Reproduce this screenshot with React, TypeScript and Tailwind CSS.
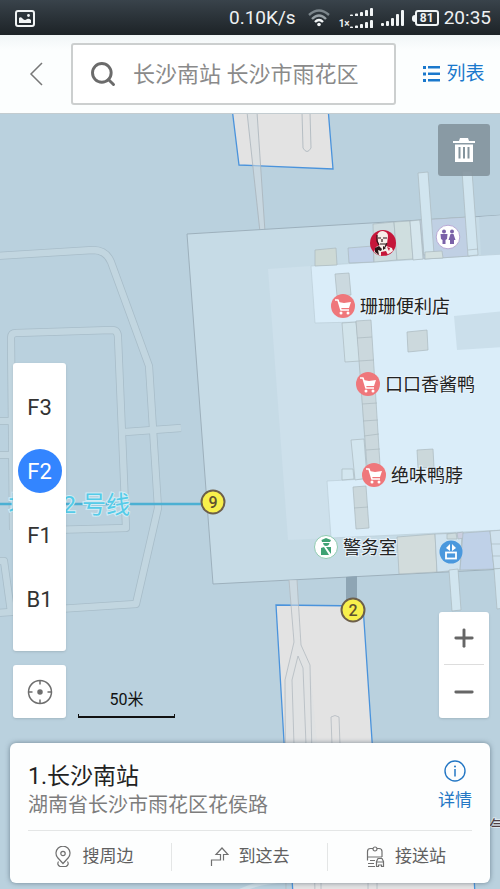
import React, { useState } from 'react';
import { Minus, Plus, Search } from 'lucide-react';

const FLOORS = ['F3', 'F2', 'F1', 'B1'];

const shops = [
  { name: '珊珊便利店', x: 343, y: 306 },
  { name: '口口香酱鸭', x: 368, y: 384 },
  { name: '绝味鸭脖', x: 374, y: 475 },
];

const exits = [
  { label: '9', x: 213, y: 502 },
  { label: '2', x: 353, y: 610 },
];

const roads = [
  'M-4 256 L93 250 Q106 250 111 262 L149 366 L158 508 L136 604 L-4 613',
  'M13 530 L11 338 Q11 333 16 333 L112 330 Q118 330 118 338 L126 528 L13 531',
  'M125 432 L181 428',
  'M-4 421 H12',
  'M-4 455 H12',
  'M-4 561 H4 L11 612',
];

// rooms along the corridor and the outer edge of the building
const rooms = [
  { points: '315,250 336,248 337,265 315,266', fill: '#cdd9d5' },
  { points: '348,248 373,246 374,262 349,263', fill: '#c1d2e9' },
  { points: '373,224 394,222 397,260 374,262', fill: '#cddce0' },
  { points: '394,222 410,221 413,259 397,260', fill: '#cfdedf' },
  { points: '410,221 420,220 423,259 413,260', fill: '#d5e6ed' },
  { points: '420,220 467,217 470,256 424,259', fill: '#c0d0e4' },
  { points: '418,173 428,172 434,254 424,255', fill: '#d1e5ef' },
  { points: '462,171 472,171 478,255 468,256', fill: '#d1e5ef' },
  { points: '425,252 442,251 443,258 425,259', fill: '#d3e0e0' },
  { points: '335,274 349,273 351,295 337,296', fill: '#cbd9df' },
  { points: '407,332 427,330 428,350 408,352', fill: '#ccd9dd' },
  { points: '417,450 433,449 434,467 418,468', fill: '#cbd8db' },
  { points: '342,323 356,322 360,361 345,362', fill: '#d2e4eb' },
  { points: '351,440 364,439 367,478 355,480', fill: '#d3e6ef' },
  { points: '342,469 353,469 354,479 342,480', fill: '#d3e6ef' },
  { points: '356,321 371,320 380,465 367,466', fill: '#cbd8dd' },
  { points: '353,487 366,486 369,528 356,529', fill: '#cbd8dc' },
  { points: '397,537 435,534 437,572 399,574', fill: '#d2dcdc' },
  { points: '435,534 462,533 460,570 437,572', fill: '#d0e3ef' },
  { points: '447,534 456,533 457,539 447,539', fill: '#cddbde' },
  { points: '457,533 463,532 464,538 458,539', fill: '#cbcfe0' },
  { points: '463,533 490,531 494,569 460,570', fill: '#bfd1e8' },
  { points: '490,531 504,530 504,568 494,569', fill: '#d0e2ee' },
  { points: '449,570 458,569 461,610 452,611', fill: '#d1e5ef' },
  { points: '494,569 504,568 504,608 497,609', fill: '#d1e5ef' },
];

const ShopPin = ({ name, x, y }: { name: string; x: number; y: number }) => (
  <g transform={`translate(${x} ${y})`}>
    <circle r="12" fill="#ef777b" />
    <path d="M-8 -6 H-5 L-2 4 H6" fill="none" stroke="#fff" strokeWidth="1.6" strokeLinejoin="round" />
    <path d="M-4.5 -4 L1 -3 L8 -4 L6 2 H-2.5 Z" fill="#fff" />
    <circle cx="-2" cy="7" r="1.5" fill="#fff" />
    <circle cx="5" cy="7" r="1.5" fill="#fff" />
    <text x="17" y="7" fontSize="18" className="fill-[#222222] stroke-[#e6f2fa] stroke-2 [paint-order:stroke]">
      {name}
    </text>
  </g>
);

const ExitPin = ({ label, x, y }: { label: string; x: number; y: number }) => (
  <g transform={`translate(${x} ${y})`}>
    <circle r="11.5" fill="#f8f04c" stroke="#6d5f4a" strokeWidth="2" />
    <text y="6" fontSize="16" textAnchor="middle" className="fill-[#5f5230] font-medium">
      {label}
    </text>
  </g>
);

const StationMap = () => (
  <svg
    className="absolute inset-0 h-full w-full"
    viewBox="0 114 500 775"
    preserveAspectRatio="xMinYMin slice"
    role="img"
    aria-label="长沙南站"
  >
    <rect y="114" width="500" height="775" fill="#bad1de" />

    <g fill="none" strokeLinejoin="round">
      {roads.map((d) => (
        <path key={d} d={d} stroke="#a8bdc9" strokeWidth="8" />
      ))}
      {roads.map((d) => (
        <path key={d} d={d} stroke="#c2d6e0" strokeWidth="6.4" />
      ))}
    </g>

    {/* platforms */}
    <g fill="#e3e3e3" stroke="#4a93dc" strokeWidth="1.3">
      <path d="M232 108 L239 165 L333 169 L328 108 Z" />
      <path d="M276 605 L363 606 L376 800 L470 800 L475 895 H293 Z" />
    </g>
    <path d="M247 112 L260 232 H265 L257 112 Z" fill="#d5dde2" fillOpacity="0.5" />
    <g fill="none" stroke="#a9b4bb" strokeWidth="0.8">
      <path d="M247 112 L260 232 M257 112 L265 232" />
      <path d="M302 112 L303 148 Q307 155 311 148 L310 112" />
    </g>

    {/* station building */}
    <path d="M187 234 L504 215 V569 L213 584 Z" fill="#c6dbe6" stroke="#9db0bc" />
    <path d="M268 269 L311 266 L380 330 V480 L330 538 L288 540 Z" fill="#cde0eb" />
    <path
      d="M311 266 L504 254 V530 L331 538 L327 481 L366 479 L366 460 L357 322 L315 323 Z"
      fill="#daedf9"
      stroke="#bccfd9"
      strokeWidth="0.7"
    />
    <path d="M454 316 L504 311 V347 L457 350 Z" fill="#cbdfeb" />
    <path d="M479 217 L504 215 V254 L481 255 Z" fill="#c0d5e2" />
    <g stroke="#aab9bf" strokeWidth="0.7">
      {rooms.map((room) => (
        <polygon key={room.points} points={room.points} fill={room.fill} />
      ))}
      <path d="M357 338 L372 337 M359 361 L374 360 M362 404 L377 403 M363 421 L378 420 M364 436 L379 434 M366 450 L380 449 M354 508 L368 507 M468 250 L478 249 M491 544 H500 M492 556 H500" />
    </g>

    <path d="M346 577 L357 576 V604 H346 Z" fill="#8ea5b4" />
    <path
      d="M289 580 L294 642 L284 680 L286 745 H317 L310 665 L300 642 L297 580 Z"
      fill="#dde1e4"
      fillOpacity="0.5"
    />
    <g fill="none" stroke="#b2bac0" strokeWidth="0.8">
      <path d="M289 580 L294 642 L285 680 L286 895 M297 580 L301 645 L310 665 L315 895" />
      <path d="M294 745 L292 680 L298 656 L303 668 L306 745" />
      <path d="M332 745 L331 717 Q335 714 339 717 L340 745" />
      <path d="M368 875 V895 M377 875 V895 M321 875 V895" />
    </g>
    <path d="M232 895 Q258 880 290 881" fill="none" stroke="#cfdfe7" strokeWidth="4" />

    {/* metro line */}
    <path d="M0 504 H213" stroke="#4cb0d3" strokeWidth="2.6" />
    <text
      x="130"
      y="513"
      fontSize="24"
      textAnchor="end"
      className="fill-[#55cbe8] stroke-[#d2ecf5] stroke-2 [paint-order:stroke]"
    >
      地铁 2 号线
    </text>
    {exits.map((exit) => (
      <ExitPin key={exit.label} {...exit} />
    ))}
    {shops.map((shop) => (
      <ShopPin key={shop.name} {...shop} />
    ))}

    {/* KFC */}
    <g transform="translate(383 243)">
      <circle r="13" fill="#c5163a" />
      <path d="M-9 9 L-7 4 L-3 2 L3 3 L9 5 L10 8 Q4 13 -2 12.800 Q-6 12 -9 9 Z" fill="#f7eeea" />
      <path d="M-6 -7 Q-5 -12 0 -12 Q5 -11 5 -7 L4 1 L1 6 L-3 4 L-5 -1 Z" fill="#f7eeea" />
      <path
        d="M-6 -8 L-6 -2 L-4 2 M-5 -5 H-2 M0 -5 H4 M-1 -4 V-1 M-3 1 H3 M4 0 L2 4"
        fill="none"
        stroke="#2a1517"
        strokeWidth="1.2"
      />
      <path d="M-8 5 L-4 3 L-1 6 L-2 8 L-5 7 L-4 12 L-8 9 Z M0 3 L3 5 L0 7 Z" fill="#2a1517" />
      <path d="M-2 9 L3 8 L5 12 L-2 13 Z M4 4 L7 5 L6 8 Z" fill="#c5163a" />
    </g>

    {/* restroom */}
    <g transform="translate(448 237)">
      <circle r="11.8" fill="#fff" stroke="#b9a9d6" />
      <g fill="#7b62a8">
        <circle cx="-4" cy="-5.5" r="2" />
        <circle cx="4" cy="-5.5" r="2" />
        <path d="M-7.500 -3 H-0.500 L-1 2 L-2.500 3 V7 H-5.500 V3 L-7 2 Z" />
        <path d="M2.500 -3 H5.500 L7.500 3 H6 V7 H2 V3 H0.500 Z" />
      </g>
    </g>

    {/* police room */}
    <g transform="translate(326 547)">
      <circle r="11.5" fill="#fff" stroke="#8fcbb0" />
      <g fill="#3fa274">
        <path d="M-4.500 -7 L0 -9 L5 -7 L4 -5 H-4 Z" />
        <path d="M-3 -4 H3.500 Q3 -1 0 -1 Q-2.500 -1 -3 -4 Z" />
        <path d="M-5 1 L-2 0 L3 8 H-5 Z M0 0 H5 V7 Z" />
      </g>
      <text x="17" y="7" fontSize="18" className="fill-[#222222] stroke-[#e6f2fa] stroke-2 [paint-order:stroke]">
        警务室
      </text>
    </g>

    {/* elevator */}
    <g transform="translate(451 552)">
      <circle r="11.5" fill="#4a98dd" />
      <path d="M-5 -4 L-1 -8 V-1 Z M5 -4 L1 -8 V-1 Z" fill="#fff" />
      <rect x="-5" y="0.5" width="10" height="6" fill="none" stroke="#fff" strokeWidth="1.8" />
    </g>

    <text x="489" y="834" fontSize="18" className="fill-[#4f3f42] stroke-[#dce8ef] stroke-2 [paint-order:stroke]">
      气
    </text>
  </svg>
);

const SignalBars = ({ className }: { className: string }) => (
  <svg className={className} viewBox="0 0 23 16" preserveAspectRatio="none" fill="#f1f4f5" aria-hidden="true">
    <rect x="0" y="13" width="3" height="3" rx="1" />
    <rect x="5" y="11" width="3" height="5" rx="1" />
    <rect x="10" y="8" width="3" height="8" rx="1" />
    <rect x="15" y="4" width="3" height="12" rx="1" />
    <rect x="20" y="0" width="3" height="16" rx="1" />
  </svg>
);

const StatusBar = () => (
  <div className="flex h-[35px] shrink-0 items-center bg-linear-to-b from-[#39434b] to-[#1d2327] pt-px pr-[9px] pl-[15px] text-[19px] text-[#eef1f2]">
    <svg className="h-[17px] w-5" viewBox="0 0 20 17" aria-hidden="true">
      <rect x="1" y="1" width="18" height="15" rx="2" fill="none" stroke="#f1f4f5" strokeWidth="2" />
      <path d="M4 13 V8 Q6 6 8 9 Q10 11 12 9 Q14 8 16 10 V13 Z" fill="#f1f4f5" />
      <circle cx="13.500" cy="5.500" r="1.400" fill="#f1f4f5" />
    </svg>
    <span className="ml-auto">0.10K/s</span>
    <svg className="ml-3 h-[18px] w-[22px]" viewBox="0 0 22 18" fill="none" strokeWidth="2.400" aria-hidden="true">
      <path d="M1 6 Q11 -3 21 6" stroke="#7b858b" />
      <path d="M4 10 Q11 3 18 10" stroke="#98a1a6" />
      <path d="M7 13 Q11 9 15 13" stroke="#f1f4f5" />
      <circle cx="11" cy="15.500" r="1.800" fill="#f1f4f5" />
    </svg>
    <div className="ml-[9px] flex flex-col items-end gap-1">
      <SignalBars className="h-[8px] w-[23px]" />
      <div className="flex items-end">
        <span className="text-[10px] leading-[8px] font-bold">1×</span>
        <SignalBars className="h-[8px] w-[23px]" />
      </div>
    </div>
    <SignalBars className="ml-2 h-4 w-[23px]" />
    <div className="ml-2 flex items-center">
      <span className="h-[7px] w-[3px] rounded-l-sm bg-[#f1f4f5]" />
      <span className="flex h-4 w-6 items-center justify-center rounded-[3px] border-2 border-[#f1f4f5] text-[12px] leading-none font-bold">
        81
      </span>
    </div>
    <time className="ml-[5px]">20:35</time>
  </div>
);

const actions = [
  {
    label: '搜周边',
    icon: (
      <>
        <path d="M9 17.500 L3.500 11.500 A7 7 0 1 1 14.500 11.500 Z" />
        <circle cx="9" cy="7.500" r="2.200" />
        <path d="M4.500 15.500 Q2.500 18.500 6 20.500 H12 Q15.500 18.500 13.500 15.500" />
      </>
    ),
  },
  {
    label: '到这去',
    icon: <path d="M1.500 20 V14 H10.500 V8.500 H6 L12 2 L18 8.500 H13.500 V14.500" />,
  },
  {
    label: '接送站',
    icon: (
      <>
        <path d="M8 17.500 H2 M4 14.500 H9 M1.500 14.500 V5.500 Q1.500 2.500 4.500 2.500 H7 M11 2.500 H13 Q16 2.500 16 5.500 V11 M1.500 11 H16" />
        <circle cx="9" cy="3" r="2" />
        <path d="M2 20.500 H9 M10.500 20.500 V15.500 L12 12.500 H16 L17.500 15.500 V20.500 H15.500 V19 H12.500 V20.500 Z M10.500 16 H17.500" />
      </>
    ),
  },
];

export default function App() {
  const [floor, setFloor] = useState('F2');
  const [query, setQuery] = useState('长沙南站 长沙市雨花区');

  return (
    <div className="flex min-h-screen flex-col bg-white font-[Roboto,'Noto_Sans_CJK_SC',sans-serif]">
      <StatusBar />

      <header className="flex h-[79px] shrink-0 items-center border-b border-[#c3ccd0] bg-linear-to-b from-[#f1f6f7] to-[#fcfefe] to-20%">
        <button type="button" aria-label="返回" className="flex h-full w-[71px] items-center justify-center">
          <svg className="h-6 w-[14px]" viewBox="0 0 14 24" fill="none" stroke="#777" strokeWidth="1.500">
            <path d="M13 1 L2 12 L13 23" />
          </svg>
        </button>
        <label className="flex h-[62px] min-w-0 flex-1 items-center rounded-[3px] border-2 border-[#cccfcf] bg-white pr-2 pl-4">
          <Search className="h-7 w-7 shrink-0 text-[#6b6b6b]" strokeWidth={2.5} />
          <input
            type="text"
            aria-label="搜索"
            value={query}
            onChange={(e) => setQuery(e.target.value)}
            className="ml-4 w-full min-w-0 bg-transparent text-[22px] text-[#8a8a8a] outline-none"
          />
        </label>
        <button
          type="button"
          className="flex h-full w-[104px] items-center justify-center gap-1.5 pl-3 text-[19px] text-[#1a78cc]"
        >
          <svg className="h-4 w-[17px]" viewBox="0 0 17 16" fill="#1a78cc" aria-hidden="true">
            <path d="M0 0H3V3H0Z M5 0H17V2.500H5Z M0 6.500H3V9.500H0Z M5 6.500H17V9H5Z M0 13H3V16H0Z M5 13H17V15.500H5Z" />
          </svg>
          列表
        </button>
      </header>

      <main className="relative flex flex-1 flex-col overflow-hidden px-[10px] pt-[10px] pb-[6px]">
        <StationMap />

        <button
          type="button"
          aria-label="清除"
          className="relative flex h-[52px] w-[52px] items-center justify-center self-end rounded-[3px] bg-[#84949d]/90"
        >
          <svg className="h-[26px] w-[24px]" viewBox="0 0 24 26" aria-hidden="true">
            <path d="M1 4 H7 L8 1 H16 L17 4 H23 V6 H1 Z" fill="#fff" />
            <path d="M3 7.500 H21 V25 H3 Z" fill="#fff" />
            <path d="M7.500 10 V21.500 M12 10 V21.500 M16.500 10 V21.500" stroke="#84949d" strokeWidth="2" />
          </svg>
        </button>

        <div className="relative mt-auto flex items-end pt-6 pr-px pl-[3px]">
          <div className="flex flex-col gap-[14px]">
            <div className="flex w-[53px] flex-col items-center rounded-[3px] bg-white pt-3 pb-5 shadow-sm">
              {FLOORS.map((name) => (
                <button
                  key={name}
                  type="button"
                  onClick={() => setFloor(name)}
                  aria-pressed={floor === name}
                  className="flex h-16 w-full items-center justify-center text-[22px]"
                >
                  <span
                    className={
                      floor === name
                        ? 'flex h-11 w-11 items-center justify-center rounded-full bg-[#3385ff] text-white'
                        : 'text-[#333333]'
                    }
                  >
                    {name}
                  </span>
                </button>
              ))}
            </div>
            <button
              type="button"
              aria-label="定位"
              className="flex h-[53px] w-[53px] items-center justify-center rounded-[3px] bg-white shadow-sm"
            >
              <svg className="h-[26px] w-[26px]" viewBox="0 0 26 26" fill="none" stroke="#6e6e6e" strokeWidth="1.500">
                <circle cx="13" cy="13" r="11.500" />
                <path d="M13 1 V5.500 M13 20.500 V25 M1 13 H5.500 M20.500 13 H25" />
                <circle cx="13" cy="13" r="2" fill="#6e6e6e" />
              </svg>
            </button>
          </div>

          <div className="ml-3 w-[97px] text-center text-[16px] leading-5 text-[#111111]">
            50米
            <div className="mt-1 h-1 border-x border-b-2 border-[#111111]" />
          </div>

          <div className="ml-auto flex w-[50px] flex-col items-center rounded-[3px] bg-white shadow-sm">
            <button type="button" aria-label="放大" className="flex h-[52px] w-full items-center justify-center">
              <Plus className="h-7 w-7 text-[#666666]" strokeWidth={2.5} />
            </button>
            <div className="h-px w-10 bg-[#dddddd]" />
            <button type="button" aria-label="缩小" className="flex h-[53px] w-full items-center justify-center">
              <Minus className="h-7 w-7 text-[#666666]" strokeWidth={2.5} />
            </button>
          </div>
        </div>

        <section className="relative mt-[25px] rounded-md bg-[#fdfefe] px-[18px] shadow-[0_0_5px_rgba(60,80,95,0.6)]">
          <div className="flex h-[88px] items-center justify-between border-b border-[#e4e6e6]">
            <div className="pt-2">
              <h1 className="text-[23px] leading-7 text-[#222222]">1.长沙南站</h1>
              <p className="text-[20px] leading-7 text-[#7d7d7d]">湖南省长沙市雨花区花侯路</p>
            </div>
            <a href="#detail" className="flex flex-col items-center gap-1 text-[17px] leading-7 text-[#2477c4]">
              <svg className="h-[22px] w-[22px]" viewBox="0 0 22 22" fill="none" stroke="#2477c4" aria-hidden="true">
                <circle cx="11" cy="11" r="10" strokeWidth="1.400" />
                <path d="M11 9 V16.500" strokeWidth="1.500" />
                <circle cx="11" cy="6.500" r="1" fill="#2477c4" stroke="none" />
              </svg>
              详情
            </a>
          </div>
          <div className="-mx-3 grid h-[52px] grid-cols-3 items-center divide-x divide-[#e4e6e6]">
            {actions.map((action) => (
              <button
                key={action.label}
                type="button"
                className="flex h-7 items-center justify-center gap-[10px] text-[17px] text-[#606060]"
              >
                <svg className="h-[22px] w-[19px]" viewBox="0 0 19 22" fill="none" stroke="#707070" strokeWidth="1.200">
                  {action.icon}
                </svg>
                {action.label}
              </button>
            ))}
          </div>
        </section>
      </main>
    </div>
  );
}
